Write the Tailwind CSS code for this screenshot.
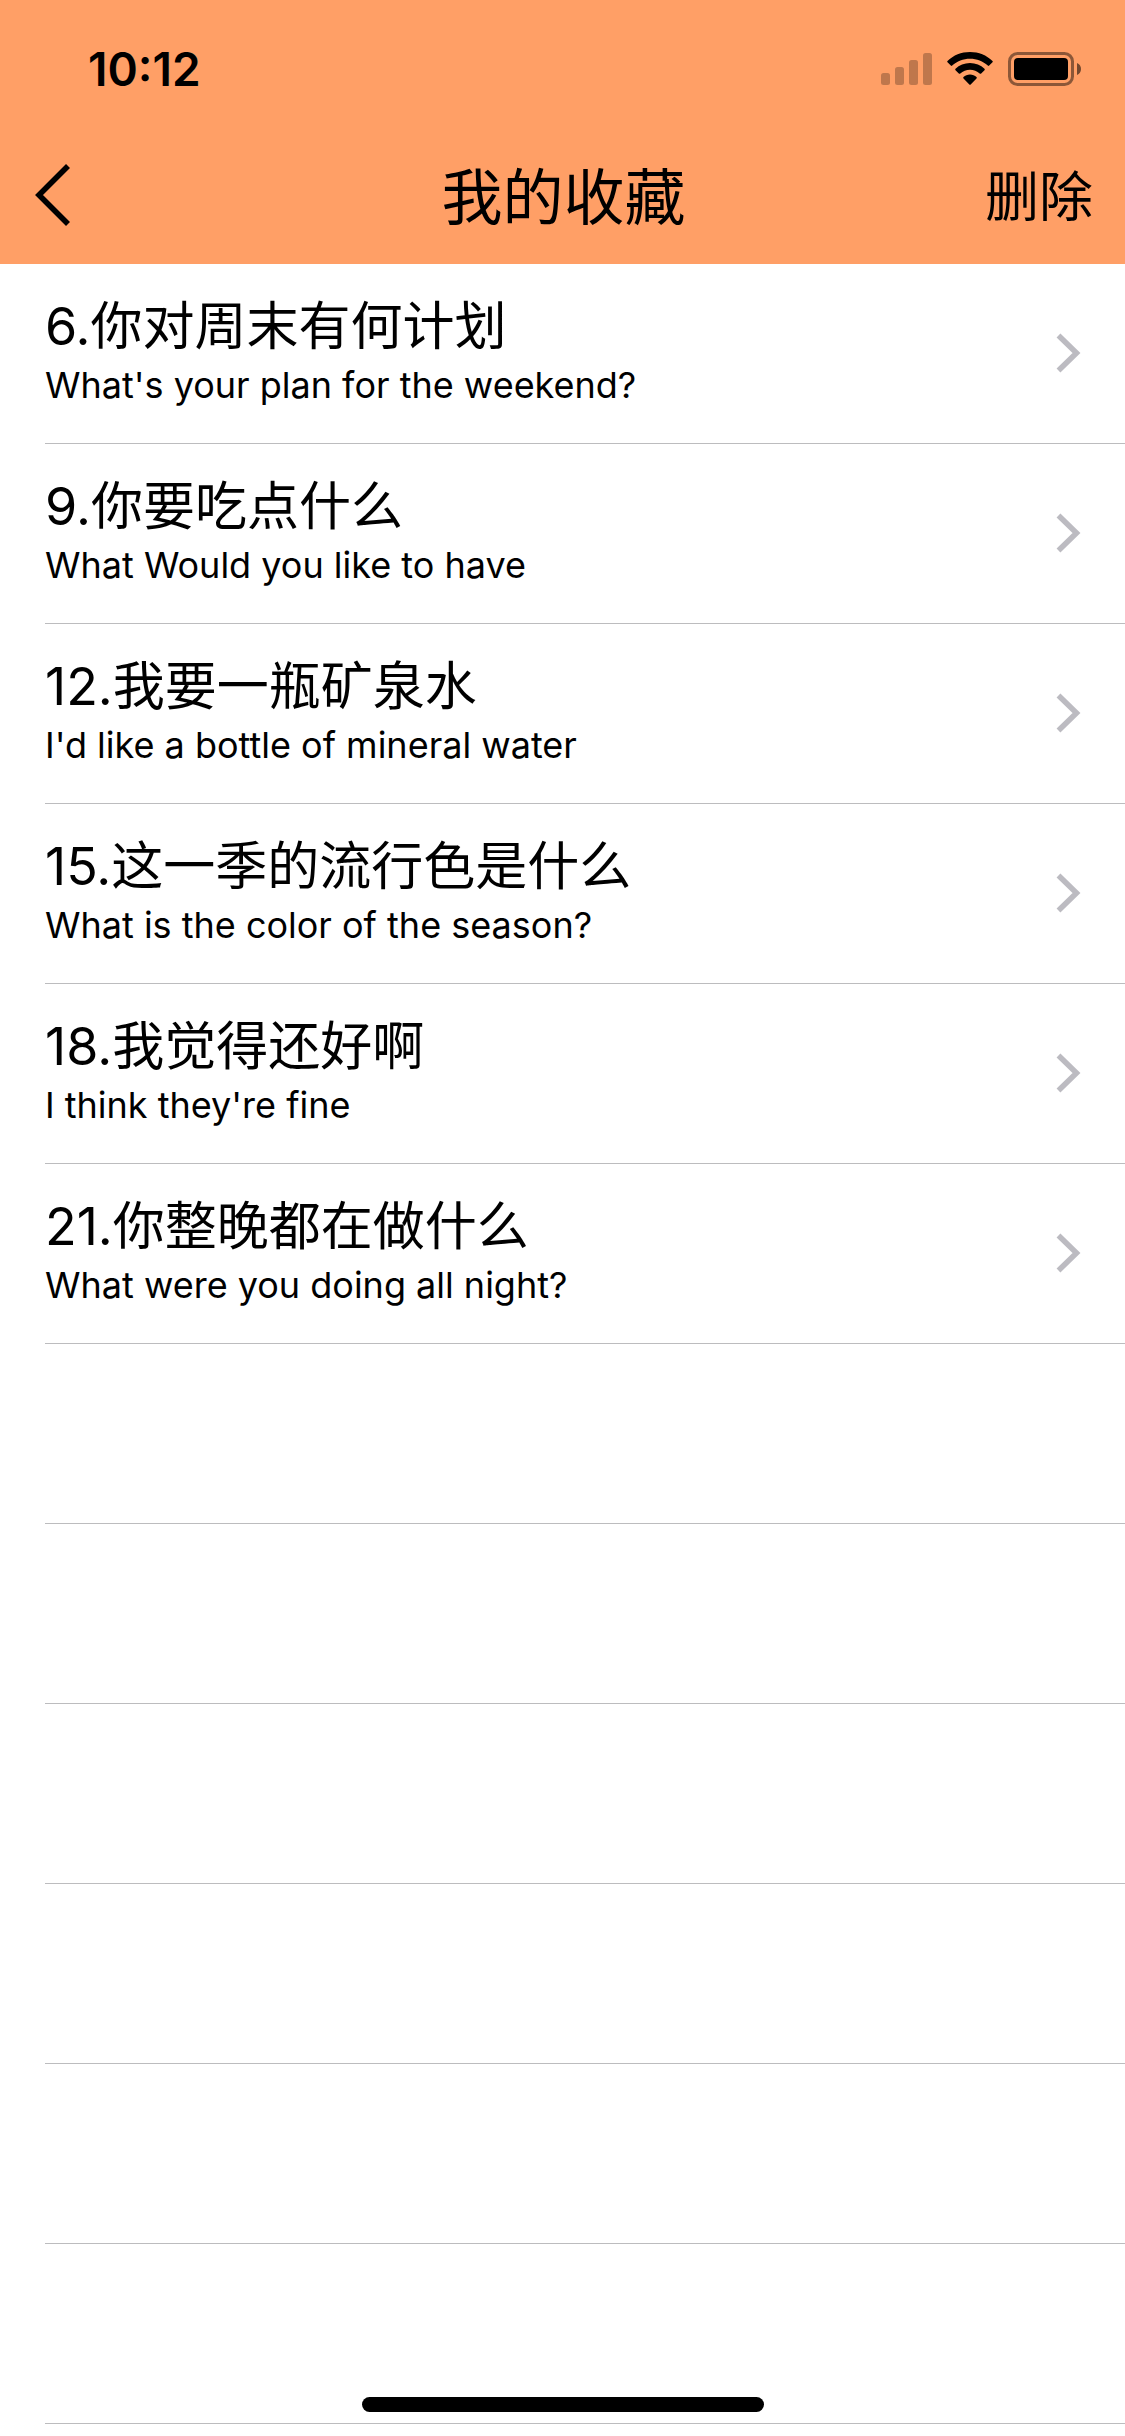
<!DOCTYPE html>
<html lang="zh-CN">
<head>
    <meta charset="UTF-8">
    <meta name="viewport" content="width=device-width, initial-scale=1.0">
    <title>我的收藏</title>
    <script src="https://cdn.jsdelivr.net/npm/@tailwindcss/browser@4"></script>
</head>
<body class="bg-white text-black font-['Inter','Noto_Sans_CJK_SC',sans-serif]">
    <header class="bg-[#ff9f66]">
        <!-- Status bar -->
        <div class="flex items-center justify-between h-[132px] pt-1.5 pl-[88px] pr-11">
            <span class="text-[46px] leading-[60px] font-semibold">10:12</span>
            <div class="flex items-center">
                <svg class="w-[51px] h-[34px]" viewBox="0 0 51 34" fill="#000" fill-opacity="0.25">
                    <rect x="0" y="21" width="9" height="12" rx="2.5"/>
                    <rect x="14" y="15" width="9" height="18" rx="2.5"/>
                    <rect x="28" y="8" width="9" height="25" rx="2.5"/>
                    <rect x="42" y="1" width="9" height="32" rx="2.5"/>
                </svg>
                <svg class="w-[46px] h-[34px] ml-[15px]" viewBox="0 0 46 34">
                    <path d="M23 0C31.700 0 39.600 3.300 45.500 8.900Q46.100 9.600 45.500 10.300L42.200 13.600Q41.500 14.200 40.800 13.600C36 9.200 29.800 6.800 23 6.800S10 9.200 5.200 13.600Q4.500 14.200 3.800 13.600L.5 10.300Q-.1 9.600 .5 8.900C6.400 3.300 14.300 0 23 0Z"/>
                    <path d="M23 11C28.600 11 33.700 13.100 37.500 16.700Q38.200 17.500 37.500 18.200L34.200 21.500Q33.400 22.200 32.700 21.500C30.100 19.100 26.700 17.700 23 17.700S15.900 19.100 13.300 21.500Q12.600 22.200 11.800 21.500L8.500 18.200Q7.800 17.500 8.500 16.700C12.300 13.100 17.400 11 23 11Z"/>
                    <path d="M23 22.500C25.500 22.500 27.800 23.400 29.500 24.900Q30.200 25.700 29.500 26.400L23.700 32.400Q23 33.100 22.300 32.400L16.500 26.400Q15.800 25.700 16.500 24.900C18.200 23.400 20.500 22.500 23 22.500Z"/>
                </svg>
                <svg class="w-[73px] h-[34px] ml-[15px]" viewBox="0 0 73 34">
                    <rect x="1.500" y="1.500" width="63" height="31" rx="8" fill="none" stroke="#000" stroke-opacity="0.45" stroke-width="3"/>
                    <rect x="6" y="6" width="54" height="22" rx="4"/>
                    <path d="M69 11C71.500 12 73 14.300 73 17S71.500 22 69 23Z" fill-opacity="0.55"/>
                </svg>
            </div>
        </div>
        <!-- Nav bar -->
        <nav class="grid grid-cols-3 items-center h-[132px] pl-[34px] pr-8">
            <button type="button" aria-label="返回" class="justify-self-start pb-1.5">
                <svg class="w-9 h-[62px]" viewBox="0 0 36 62" fill="none" stroke="#000" stroke-width="5.600">
                    <path d="M34 2L5 31L34 60"/>
                </svg>
            </button>
            <h1 class="justify-self-center text-[61px] leading-[80px] whitespace-nowrap">我的收藏</h1>
            <button type="button" class="justify-self-end text-[54px] leading-[80px]">删除</button>
        </nav>
    </header>

    <main>
        <ul id="list" class="pl-[45px]"></ul>
    </main>

    <!-- Home indicator -->
    <div class="fixed bottom-6 left-1/2 -translate-x-1/2 w-[402px] h-[15px] rounded-full bg-black"></div>

    <script>
        const favorites = [
            { id: 6, zh: '你对周末有何计划', en: "What's your plan for the weekend?" },
            { id: 9, zh: '你要吃点什么', en: 'What Would you like to have' },
            { id: 12, zh: '我要一瓶矿泉水', en: "I'd like a bottle of mineral water" },
            { id: 15, zh: '这一季的流行色是什么', en: 'What is the color of the season?' },
            { id: 18, zh: '我觉得还好啊', en: "I think they're fine" },
            { id: 21, zh: '你整晚都在做什么', en: 'What were you doing all night?' },
        ];
        const emptyRows = 6;

        const rows = favorites.map((item) => `
            <li class="h-[180px] border-b border-[#bcbcbe]">
                <a href="#" class="flex items-center justify-between h-full pb-0.5 pr-11">
                    <div>
                        <p class="text-[52px] leading-[64px]">${item.id}.${item.zh}</p>
                        <p class="text-[36px] leading-[52px]">${item.en}</p>
                    </div>
                    <svg class="w-[25px] h-10" viewBox="0 0 25 40" fill="none" stroke="#bcbbc1" stroke-width="5.500">
                        <path d="M2.500 2.500L20.500 20L2.500 37.500"/>
                    </svg>
                </a>
            </li>`);
        for (let i = 0; i < emptyRows; i++) {
            rows.push('<li class="h-[180px] border-b border-[#bcbcbe]"></li>');
        }
        document.getElementById('list').innerHTML = rows.join('');
    </script>
</body>
</html>
